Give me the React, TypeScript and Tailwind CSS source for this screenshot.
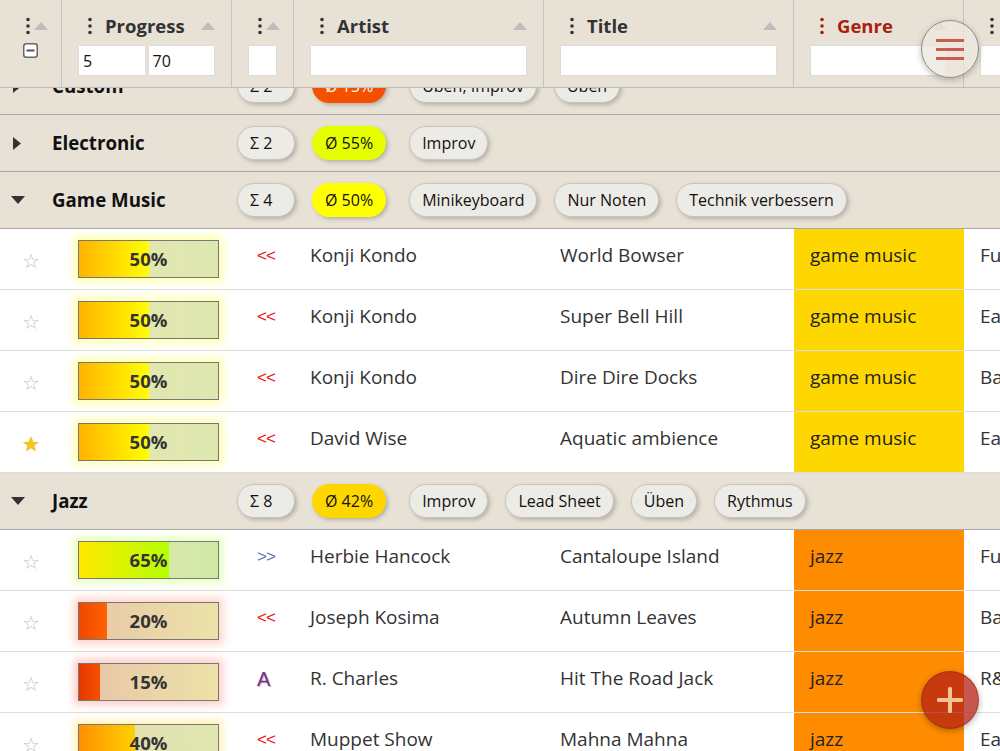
import { useLayoutEffect, useRef } from "react";

type Row = {
  fav: boolean;
  pct: number;
  fill: [string, string];
  rest: [string, string];
  glow: string;
  dir: "back" | "fwd" | "a";
  artist: string;
  title: string;
  genre: string;
  style: string;
};

type Group = {
  name: string;
  open: boolean;
  count: number;
  avg: number;
  avgBg: string;
  avgText: string;
  tags: string[];
  rows: Row[];
};

const yellow50 = {
  pct: 50,
  fill: ["#ffb300", "#ffff00"] as [string, string],
  rest: ["#e8e4ae", "#dde8b0"] as [string, string],
  glow: "rgba(255,255,80,0.45)",
};

const groups: Group[] = [
  {
    name: "Custom",
    open: false,
    count: 2,
    avg: 15,
    avgBg: "bg-[#f55000]",
    avgText: "text-white",
    tags: ["Üben, Improv", "Üben"],
    rows: [],
  },
  {
    name: "Electronic",
    open: false,
    count: 2,
    avg: 55,
    avgBg: "bg-[#e5ff00]",
    avgText: "text-[#111]",
    tags: ["Improv"],
    rows: [],
  },
  {
    name: "Game Music",
    open: true,
    count: 4,
    avg: 50,
    avgBg: "bg-[#ffff00]",
    avgText: "text-[#111]",
    tags: ["Minikeyboard", "Nur Noten", "Technik verbessern"],
    rows: [
      { fav: false, ...yellow50, dir: "back", artist: "Konji Kondo", title: "World Bowser", genre: "game music", style: "Funky" },
      { fav: false, ...yellow50, dir: "back", artist: "Konji Kondo", title: "Super Bell Hill", genre: "game music", style: "Easy" },
      { fav: false, ...yellow50, dir: "back", artist: "Konji Kondo", title: "Dire Dire Docks", genre: "game music", style: "Ballade" },
      { fav: true, ...yellow50, dir: "back", artist: "David Wise", title: "Aquatic ambience", genre: "game music", style: "Easy" },
    ],
  },
  {
    name: "Jazz",
    open: true,
    count: 8,
    avg: 42,
    avgBg: "bg-[#ffd700]",
    avgText: "text-[#111]",
    tags: ["Improv", "Lead Sheet", "Üben", "Rythmus"],
    rows: [
      { fav: false, pct: 65, fill: ["#ffe800", "#b4ff00"], rest: ["#dfe8ae", "#d2e8a8"], glow: "rgba(190,255,90,0.4)", dir: "fwd", artist: "Herbie Hancock", title: "Cantaloupe Island", genre: "jazz", style: "Funk" },
      { fav: false, pct: 20, fill: ["#f04800", "#ff6200"], rest: ["#e8c6a8", "#ece2a8"], glow: "rgba(255,110,80,0.3)", dir: "back", artist: "Joseph Kosima", title: "Autumn Leaves", genre: "jazz", style: "Ballad" },
      { fav: false, pct: 15, fill: ["#e63800", "#f45000"], rest: ["#e8c4a8", "#ece2a8"], glow: "rgba(255,90,70,0.3)", dir: "a", artist: "R. Charles", title: "Hit The Road Jack", genre: "jazz", style: "R&B" },
      { fav: false, pct: 40, fill: ["#ff9000", "#ffd000"], rest: ["#e6dcae", "#dfe6b0"], glow: "rgba(255,220,80,0.4)", dir: "back", artist: "Muppet Show", title: "Mahna Mahna", genre: "jazz", style: "Easy" },
      { fav: false, pct: 45, fill: ["#ff9800", "#ffe000"], rest: ["#e6dcae", "#dfe6b0"], glow: "rgba(255,220,80,0.4)", dir: "fwd", artist: "Dave Brubeck", title: "Take Five", genre: "jazz", style: "Cool" },
    ],
  },
];

function Dots({ red }: { red?: boolean }) {
  return (
    <svg width="12" height="20" viewBox="0 0 12 20" className="shrink-0">
      {[3.5, 10, 16.5].map((cy) => (
        <circle key={cy} cx="6" cy={cy} r="1.8" fill={red ? "#a82010" : "#333"} />
      ))}
    </svg>
  );
}

function SortUp() {
  return (
    <svg width="14" height="8" viewBox="0 0 14 8" className="shrink-0">
      <polygon points="0,8 7,0 14,8" fill="#bdbdbd" />
    </svg>
  );
}

function FilterInput({ value, w }: { value?: string; w: string }) {
  return (
    <div className={`${w} h-[31px] bg-white border border-[#dcdcdc] px-1 flex items-center text-[16px] text-[#111]`}>
      {value}
    </div>
  );
}

function HeadCell({ w, title, red, children }: { w: string; title: string; red?: boolean; children: React.ReactNode }) {
  return (
    <div className={`${w} shrink-0 border-r border-[#c4c4c4] px-4 pt-[14px]`}>
      <div className="h-[24px] flex items-center pl-[6px] gap-[9px]">
        <Dots red={red} />
        <span className={`text-[18.5px] font-bold leading-none ${red ? "text-[#a82010]" : "text-[#333]"}`}>{title}</span>
        <span className="ml-auto">
          <SortUp />
        </span>
      </div>
      <div className="mt-[7px] flex gap-[2px]">{children}</div>
    </div>
  );
}

function Header() {
  return (
    <div className="sticky top-0 z-10 flex h-[88px] bg-[#e8e2d6] border-b border-[#bdbdbd]">
      <div className="w-[62px] shrink-0 border-r border-[#c4c4c4] pt-[14px]">
        <div className="h-[24px] flex items-center pl-[22px]">
          <Dots />
          <SortUp />
        </div>
        <div className="mt-[5px] pl-[23px]">
          <svg width="15" height="15" viewBox="0 0 15 15">
            <rect x="0.75" y="0.75" width="13.5" height="13.5" rx="2.5" fill="#fff" stroke="#666" strokeWidth="1.5" />
            <rect x="3.5" y="6.5" width="8" height="2" fill="#555" />
          </svg>
        </div>
      </div>
      <HeadCell w="w-[170px]" title="Progress">
        <FilterInput w="w-[69px]" value="5" />
        <FilterInput w="w-[69px]" value="70" />
      </HeadCell>
      <div className="w-[62px] shrink-0 border-r border-[#c4c4c4] px-4 pt-[14px]">
        <div className="h-[24px] flex items-center pl-[6px]">
          <Dots />
          <SortUp />
        </div>
        <div className="mt-[7px]">
          <FilterInput w="w-full" />
        </div>
      </div>
      <HeadCell w="w-[250px]" title="Artist">
        <FilterInput w="w-full" />
      </HeadCell>
      <HeadCell w="w-[250px]" title="Title">
        <FilterInput w="w-full" />
      </HeadCell>
      <HeadCell w="w-[170px]" title="Genre" red>
        <FilterInput w="w-full" />
      </HeadCell>
      <HeadCell w="w-[200px]" title="Style">
        <FilterInput w="w-full" />
      </HeadCell>
    </div>
  );
}

function Chip({ children, className = "" }: { children: React.ReactNode; className?: string }) {
  return (
    <div
      className={`h-[34px] rounded-full flex items-center text-[16px] whitespace-nowrap shadow-[2px_2px_4px_rgba(0,0,0,0.22)] ${className}`}
    >
      {children}
    </div>
  );
}

function GroupRow({ g }: { g: Group }) {
  return (
    <div className="h-[57px] flex items-center bg-[#e8e2d6] border-b border-[#a8a8a8] pl-[11px]">
      <div className="w-[41px] flex items-center">
        {g.open ? (
          <svg width="14" height="8" viewBox="0 0 14 8">
            <polygon points="0,0 14,0 7,8" fill="#333" />
          </svg>
        ) : (
          <svg width="9" height="13" viewBox="0 0 9 13" className="ml-[2px]">
            <polygon points="0,0 8,6.5 0,13" fill="#333" />
          </svg>
        )}
      </div>
      <div className="w-[185px] text-[18.7px] font-bold text-[#111]">{g.name}</div>
      <div className="flex items-center gap-[17px]">
        <Chip className="px-[12px] bg-[#edebe6] border border-[#c9c5bd] min-w-[58px] text-[#111]">Σ {g.count}</Chip>
        <Chip className={`px-[13px] ${g.avgBg} ${g.avgText}`}>Ø {g.avg}%</Chip>
      </div>
      <div className="ml-[23px] flex items-center gap-[17px]">
        {g.tags.map((t) => (
          <Chip key={t} className="px-[12px] bg-[#edebe6] border border-[#c9c5bd] text-[#111]">
            {t}
          </Chip>
        ))}
      </div>
    </div>
  );
}

function Progress({ r }: { r: Row }) {
  return (
    <div
      className="relative w-[141px] h-[38px] border border-[#777] flex items-center justify-center"
      style={{
        background: `linear-gradient(to right, ${r.rest[0]}, ${r.rest[1]})`,
        boxShadow: `0 0 8px 4px ${r.glow}`,
      }}
    >
      <div
        className="absolute left-0 top-0 bottom-0"
        style={{ width: `${r.pct}%`, background: `linear-gradient(to right, ${r.fill[0]}, ${r.fill[1]})` }}
      />
      <span className="relative text-[18.5px] font-bold text-[#333]">{r.pct}%</span>
    </div>
  );
}

function Dir({ d }: { d: Row["dir"] }) {
  if (d === "a")
    return (
      <span className="text-[20px] font-['Liberation_Sans',sans-serif] text-[#7a2a8c] [text-shadow:1px_1px_1px_rgba(0,0,0,0.3)]">
        A
      </span>
    );
  return (
    <span
      className={`font-['Liberation_Sans',sans-serif] text-[17px] tracking-[-1px] ${
        d === "back" ? "text-[#ee1111]" : "text-[#5a78aa]"
      }`}
    >
      {d === "back" ? "<<" : ">>"}
    </span>
  );
}

function DataRow({ r }: { r: Row }) {
  const genreBg = r.genre === "jazz" ? "bg-[#ff8c00]" : "bg-[#ffd700]";
  return (
    <div className="h-[61px] flex border-b border-[#dddddd] bg-white text-[19px] text-[#333]">
      <div className="w-[62px] shrink-0 flex items-center justify-center pt-[4px]">
        {r.fav ? (
          <span className="text-[20px] text-[#f5c518] [text-shadow:0_0_1px_#c9a000]">★</span>
        ) : (
          <span className="text-[20px] text-[#c4c4c4]">☆</span>
        )}
      </div>
      <div className="w-[170px] shrink-0 flex items-center pl-4">
        <Progress r={r} />
      </div>
      <div className="w-[62px] shrink-0 flex items-center pl-[25px] pb-[6px]">
        <Dir d={r.dir} />
      </div>
      <div className="w-[250px] shrink-0 flex items-center px-4 pb-[8px]">{r.artist}</div>
      <div className="w-[250px] shrink-0 flex items-center px-4 pb-[8px]">{r.title}</div>
      <div className={`w-[170px] shrink-0 flex items-center px-4 pb-[8px] text-[#222] ${genreBg}`}>{r.genre}</div>
      <div className="w-[200px] shrink-0 flex items-center px-4 pb-[8px]">{r.style}</div>
    </div>
  );
}

export default function App() {
  const ref = useRef<HTMLDivElement>(null);

  useLayoutEffect(() => {
    if (ref.current) ref.current.scrollTop = 30;
  }, []);

  return (
    <div className="relative w-[1000px] h-[751px] overflow-hidden bg-white font-['Open_Sans',sans-serif]">
      <div ref={ref} className="h-full overflow-hidden">
        <div className="w-[1164px]">
          <Header />
          {groups.map((g) => (
            <div key={g.name}>
              <GroupRow g={g} />
              {g.open && g.rows.map((r) => <DataRow key={r.title} r={r} />)}
            </div>
          ))}
        </div>
      </div>

      <button className="absolute z-20 left-[921px] top-[20px] w-[58px] h-[58px] rounded-full bg-[rgba(236,231,222,0.8)] border border-[#8a8a8a] shadow-[0_2px_6px_rgba(0,0,0,0.25)] flex flex-col items-center justify-center gap-[6px]">
        <span className="block w-[28px] h-[3px] bg-[rgba(190,45,30,0.75)]" />
        <span className="block w-[28px] h-[3px] bg-[rgba(190,45,30,0.75)]" />
        <span className="block w-[28px] h-[3px] bg-[rgba(190,45,30,0.75)]" />
      </button>

      <button className="absolute z-20 left-[921px] top-[671px] w-[58px] h-[58px] rounded-full bg-[rgba(180,30,20,0.75)] border border-[rgba(120,40,20,0.5)] shadow-[0_2px_6px_rgba(0,0,0,0.3)] flex items-center justify-center">
        <svg width="28" height="28" viewBox="0 0 28 28">
          <rect x="12" y="1" width="4" height="26" rx="1.5" fill="#f3c494" />
          <rect x="1" y="12" width="26" height="4" rx="1.5" fill="#f3c494" />
        </svg>
      </button>
    </div>
  );
}
